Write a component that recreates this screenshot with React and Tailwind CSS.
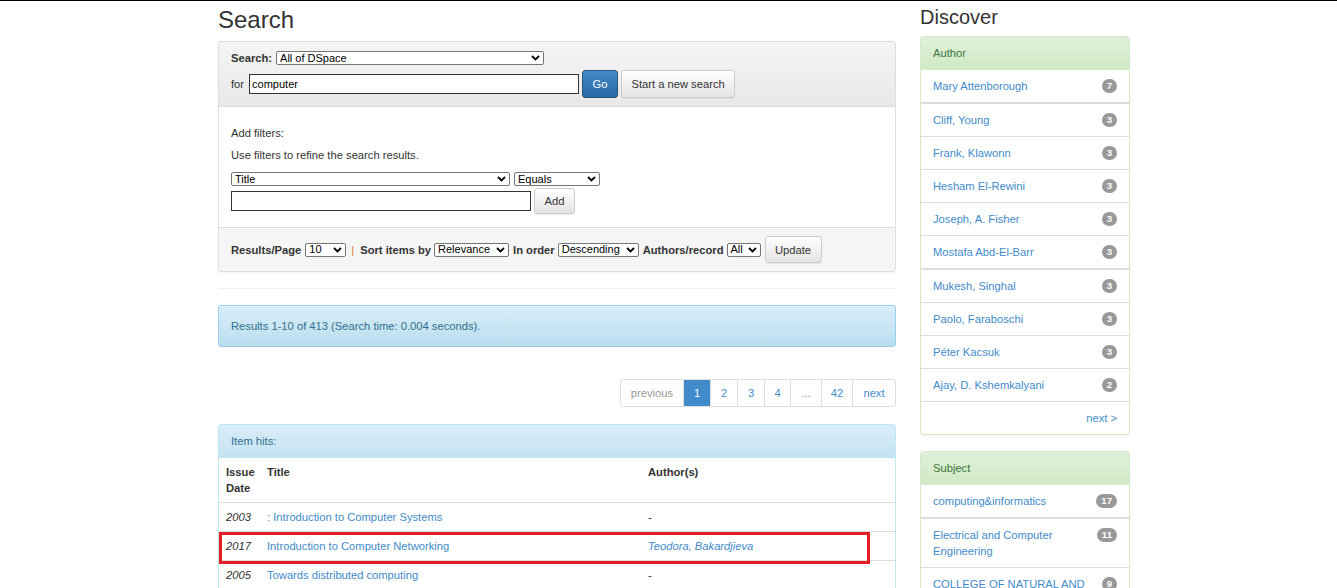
import React from 'react';

const Chevron = () => (
    <svg width="9" height="6" viewBox="0 0 9 6" className="shrink-0">
        <path d="M1 1 L4.5 4.5 L8 1" fill="none" stroke="#000" strokeWidth="1.8" />
    </svg>
);

// looks like a native select
const Sel = ({ className, children }) => (
    <span className={`inline-flex items-center justify-between h-[14px] border border-[#767676] rounded-[2px] bg-white pl-[3px] pr-[3px] text-black text-[11px] leading-none font-normal ${className}`}>
        <span>{children}</span>
        <Chevron />
    </span>
);

const DefaultBtn = ({ className, children }) => (
    <span className={`inline-flex items-center justify-center border border-[#cccccc] rounded-[3px] bg-gradient-to-b from-white to-[#e4e4e4] text-[#333] shadow-[0_1px_0_rgba(0,0,0,0.06)] ${className}`}>
        {children}
    </span>
);

const authors = [
    { name: 'Mary Attenborough', count: 7 },
    { name: 'Cliff, Young', count: 3, thick: true },
    { name: 'Frank, Klawonn', count: 3 },
    { name: 'Hesham El-Rewini', count: 3 },
    { name: 'Joseph, A. Fisher', count: 3 },
    { name: 'Mostafa Abd-El-Barr', count: 3 },
    { name: 'Mukesh, Singhal', count: 3, thick: true },
    { name: 'Paolo, Faraboschi', count: 3 },
    { name: 'Péter Kacsuk', count: 3 },
    { name: 'Ajay, D. Kshemkalyani', count: 2 },
];

const subjects = [
    { name: 'computing&informatics', count: 17 },
    { name: 'Electrical and Computer Engineering', count: 11, thick: true },
    { name: 'COLLEGE OF NATURAL AND COMPUTATIONAL SCIENCES', count: 9 },
];

const pages = [
    { label: 'previous', w: 'w-[62px]', cls: 'text-[#999]' },
    { label: '1', w: 'w-[27px]', cls: 'bg-[#428bca] text-white border-[#428bca]' },
    { label: '2', w: 'w-[27px]', cls: 'text-[#428bca]' },
    { label: '3', w: 'w-[27px]', cls: 'text-[#428bca]' },
    { label: '4', w: 'w-[26px]', cls: 'text-[#428bca]' },
    { label: '...', w: 'w-[31px]', cls: 'text-[#999]' },
    { label: '42', w: 'w-[31px]', cls: 'text-[#428bca]' },
    { label: 'next', w: 'w-[43px]', cls: 'text-[#428bca]' },
];

const Badge = ({ n }) => (
    <span className="shrink-0 ml-2 mt-px inline-flex items-center justify-center h-[14px] px-[5px] rounded-[8px] bg-[#999] text-white text-[9.6px] font-bold leading-none">
        {n}
    </span>
);

const SidePanel = ({ title, items, footer }) => (
    <div className="border border-[#d6e9c6] rounded-[3px] bg-white shadow-[0_1px_2px_rgba(0,0,0,0.05)] overflow-hidden">
        <div className="px-[12px] py-[8px] bg-gradient-to-b from-[#dff0d8] to-[#d0e9c6] text-[#3c763d] border-b border-[#d6e9c6]">
            {title}
        </div>
        {items.map((it, i) => (
            <div
                key={it.name}
                className={`flex items-start justify-between px-[12px] py-[8px] ${i === 0 ? '' : it.thick ? 'border-t-2 border-[#ddd]' : 'border-t border-[#ddd]'}`}
            >
                <span className="text-[#428bca]">{it.name}</span>
                <Badge n={it.count} />
            </div>
        ))}
        {footer && (
            <div className="px-[12px] py-[8px] border-t border-[#ddd] text-right text-[#428bca]">{footer}</div>
        )}
    </div>
);

export default function App() {
    return (
        <div className="min-h-screen bg-white border-t border-black font-['Liberation_Sans',Arial,sans-serif] text-[11.2px] leading-[16px] text-[#333]">
            <div className="ml-[218px] w-[912px] flex gap-[24px] items-start">

                {/* main column */}
                <div className="w-[678px]">
                    <h2 className="mt-[6px] mb-[8px] text-[24px] leading-[26px] font-normal">Search</h2>

                    {/* search form */}
                    <div className="border border-[#dddddd] rounded-[3px] shadow-[0_1px_2px_rgba(0,0,0,0.05)] overflow-hidden">
                        <div className="px-[12px] pt-[8px] pb-[8px] bg-gradient-to-b from-[#f5f5f5] to-[#e8e8e8] border-b border-[#dddddd]">
                            <div className="flex items-center h-[16px] gap-[4px]">
                                <span className="font-bold">Search:</span>
                                <Sel className="w-[268px]">All of DSpace</Sel>
                            </div>
                            <div className="flex items-center h-[28px] mt-[4px]">
                                <span className="mr-[5px]">for</span>
                                <span className="inline-flex items-center w-[330px] h-[20px] border border-[#333] bg-white px-[2px] text-black text-[11px]">computer</span>
                                <span className="ml-[3px] inline-flex items-center justify-center w-[36px] h-[28px] rounded-[3px] border border-[#245580] bg-gradient-to-b from-[#428bca] to-[#2a6aa6] text-white">Go</span>
                                <DefaultBtn className="ml-[3px] w-[114px] h-[28px]">Start a new search</DefaultBtn>
                            </div>
                        </div>

                        <div className="px-[12px] pt-[18px] pb-[13px] bg-white">
                            <p>Add filters:</p>
                            <p className="mt-[6px]">Use filters to refine the search results.</p>
                            <div className="flex items-center gap-[4px] mt-[9px]">
                                <Sel className="w-[279px]">Title</Sel>
                                <Sel className="w-[86px]">Equals</Sel>
                            </div>
                            <div className="flex items-center gap-[3px] mt-[2px] h-[26px]">
                                <span className="w-[300px] h-[20px] border border-[#333] bg-white"></span>
                                <DefaultBtn className="w-[41px] h-[26px]">Add</DefaultBtn>
                            </div>
                        </div>

                        <div className="px-[12px] py-[8px] bg-[#f5f5f5] border-t border-[#dddddd] flex items-center gap-[4px] h-[44px]">
                            <span className="font-bold">Results/Page</span>
                            <Sel className="w-[41px]">10</Sel>
                            <span className="ml-[1px] mr-[2px] text-[#e07b39]">|</span>
                            <span className="font-bold">Sort items by</span>
                            <Sel className="w-[75px] -ml-[1px]">Relevance</Sel>
                            <span className="font-bold">In order</span>
                            <Sel className="w-[81px] -ml-[1px]">Descending</Sel>
                            <span className="font-bold">Authors/record</span>
                            <Sel className="w-[34px] -ml-[1px]">All</Sel>
                            <DefaultBtn className="w-[57px] h-[27px]">Update</DefaultBtn>
                        </div>
                    </div>

                    <hr className="mt-[16px] border-t border-[#eeeeee]" />

                    {/* results count */}
                    <div className="mt-[16px] px-[12px] py-[12px] border border-[#9acfea] rounded-[3px] bg-gradient-to-b from-[#d9edf7] to-[#b9def0] text-[#31708f] shadow-[inset_0_1px_0_rgba(255,255,255,0.25)]">
                        Results 1-10 of 413 (Search time: 0.004 seconds).
                    </div>

                    {/* pagination */}
                    <div className="mt-[32px] flex justify-end">
                        <div className="flex h-[28px] rounded-[3px] border border-[#ddd] overflow-hidden">
                            {pages.map((p, i) => (
                                <span
                                    key={p.label}
                                    className={`flex items-center justify-center ${p.w} ${i === 0 ? '' : 'border-l border-[#ddd]'} ${p.cls}`}
                                >
                                    {p.label}
                                </span>
                            ))}
                        </div>
                    </div>

                    {/* item hits */}
                    <div className="mt-[17px] border border-[#bce8f1] rounded-t-[3px] overflow-hidden">
                        <div className="px-[12px] py-[8px] bg-gradient-to-b from-[#d9edf7] to-[#c4e3f3] text-[#31708f] border-b border-[#bce8f1]">
                            Item hits:
                        </div>
                        <div className="bg-white">
                            <div className="flex border-b border-[#ddd] font-bold">
                                <div className="w-[41px] px-[7px] py-[6px] box-content -mr-[14px]">Issue Date</div>
                                <div className="w-[381px] px-[7px] py-[6px]">Title</div>
                                <div className="flex-1 px-[7px] py-[6px]">Author(s)</div>
                            </div>
                            <div className="flex">
                                <div className="w-[41px] px-[7px] py-[6px] italic">2003</div>
                                <div className="w-[381px] px-[7px] py-[6px] text-[#428bca]">: Introduction to Computer Systems</div>
                                <div className="flex-1 px-[7px] py-[6px]">-</div>
                            </div>
                            <div className="relative flex border-t border-[#ddd]">
                                <div className="w-[41px] px-[7px] py-[6px] italic">2017</div>
                                <div className="w-[381px] px-[7px] py-[6px] text-[#428bca]">Introduction to Computer Networking</div>
                                <div className="flex-1 px-[7px] py-[6px] italic text-[#428bca]">Teodora, Bakardjieva</div>
                                <div className="absolute left-0 top-0 w-[651px] h-[32px] border-[3px] border-[#e41d26]"></div>
                            </div>
                            <div className="flex border-t border-[#ddd]">
                                <div className="w-[41px] px-[7px] py-[6px] italic">2005</div>
                                <div className="w-[381px] px-[7px] py-[6px] text-[#428bca]">Towards distributed computing</div>
                                <div className="flex-1 px-[7px] py-[6px]">-</div>
                            </div>
                        </div>
                    </div>
                </div>

                {/* sidebar */}
                <div className="w-[210px]">
                    <h2 className="mt-[5px] mb-[8px] text-[20px] leading-[22px] font-normal">Discover</h2>
                    <SidePanel title="Author" items={authors} footer="next >" />
                    <div className="mt-[16px]">
                        <SidePanel title="Subject" items={subjects} />
                    </div>
                </div>
            </div>
        </div>
    );
}
